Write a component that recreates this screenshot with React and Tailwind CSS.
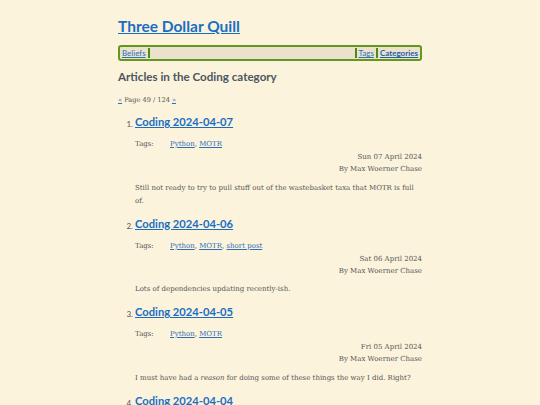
import React from 'react';

const posts = [
    {
        n: 1,
        title: 'Coding 2024-04-07',
        tags: ['Python', 'MOTR'],
        date: 'Sun 07 April 2024',
        summary: <>Still not ready to try to pull stuff out of the wastebasket taxa that MOTR is full of.</>,
    },
    {
        n: 2,
        title: 'Coding 2024-04-06',
        tags: ['Python', 'MOTR', 'short post'],
        date: 'Sat 06 April 2024',
        summary: <>Lots of dependencies updating recently-ish.</>,
    },
    {
        n: 3,
        title: 'Coding 2024-04-05',
        tags: ['Python', 'MOTR'],
        date: 'Fri 05 April 2024',
        summary: <>I must have had a <em>reason</em> for doing some of these things the way I did. Right?</>,
    },
    {
        n: 4,
        title: 'Coding 2024-04-04',
        tags: ['Python', 'MOTR'],
        date: 'Thu 04 April 2024',
        summary: <>More work.</>,
    },
];

const sans = "font-['Lato','Noto_Sans',sans-serif]";
const serif = "font-['DejaVu_Serif','Liberation_Serif',serif]";

const Post = ({ post }) => (
    <li className="flex">
        <span className={`${sans} w-[17px] shrink-0 text-right pr-[2px] text-[8px] leading-[8px] text-[#555] pt-[5px]`}>{post.n}.</span>
        <div className="flex-1">
            <a href="#" className={`${sans} block text-[11.2px] leading-[14px] font-bold text-[#1a6ec2] underline`}>{post.title}</a>
            <div className={`${serif} flex text-[7px] text-[#555] mt-[10px] leading-[10px]`}>
                <span className="w-[35px]">Tags:</span>
                <span>
                    {post.tags.map((t, i) => (
                        <span key={t}>
                            <a href="#" className="text-[#2f6fb8] underline">{t}</a>
                            {i < post.tags.length - 1 && ', '}
                        </span>
                    ))}
                </span>
            </div>
            <div className={`${serif} text-right text-[7px] text-[#555] leading-[12px] mt-[2px]`}>
                <div>{post.date}</div>
                <div>By Max Woerner Chase</div>
            </div>
            <p className={`${serif} text-[7px] text-[#555] leading-[13px] mt-[6.5px] pr-[6px]`}>{post.summary}</p>
        </div>
    </li>
);

export default function App() {
    return (
        <div className="min-h-[405px] bg-[#fbf3dc]">
            <div className="w-[304px] mx-auto pt-[14px]">
                <a href="#" className={`${sans} block text-[15.5px] leading-[24px] font-bold text-[#1a6ec2] underline`}>Three Dollar Quill</a>

                {/* Nav bar */}
                <nav className={`${sans} mt-[7px] h-[16px] flex items-center rounded-[3px] border-2 border-[#62981f] bg-[#eae2cc] text-[8px] px-[2px]`}>
                    <a href="#" className="text-[#2f6fb8] underline pr-[2px] border-r-2 border-[#4f8a17] leading-[10px]">Beliefs</a>
                    <div className="flex-1" />
                    <a href="#" className="text-[#2f6fb8] underline px-[2px] border-l-2 border-r-2 border-[#4f8a17] leading-[10px]">Tags</a>
                    <a href="#" className="text-[#1f5fa8] font-bold underline pl-[2px] leading-[10px]">Categories</a>
                </nav>

                <h1 className={`${sans} mt-[8px] text-[11.6px] leading-[16px] font-bold text-[#4d5760]`}>Articles in the Coding category</h1>

                <div className={`${serif} mt-[10px] text-[6.6px] text-[#555] leading-[10px]`}>
                    <a href="#" className="text-[#2f6fb8] underline">«</a> Page 49 / 124 <a href="#" className="text-[#2f6fb8] underline">»</a>
                </div>

                <ol className="mt-[10px] flex flex-col gap-[9px]">
                    {posts.map((p) => <Post key={p.n} post={p} />)}
                </ol>
            </div>
        </div>
    );
}
